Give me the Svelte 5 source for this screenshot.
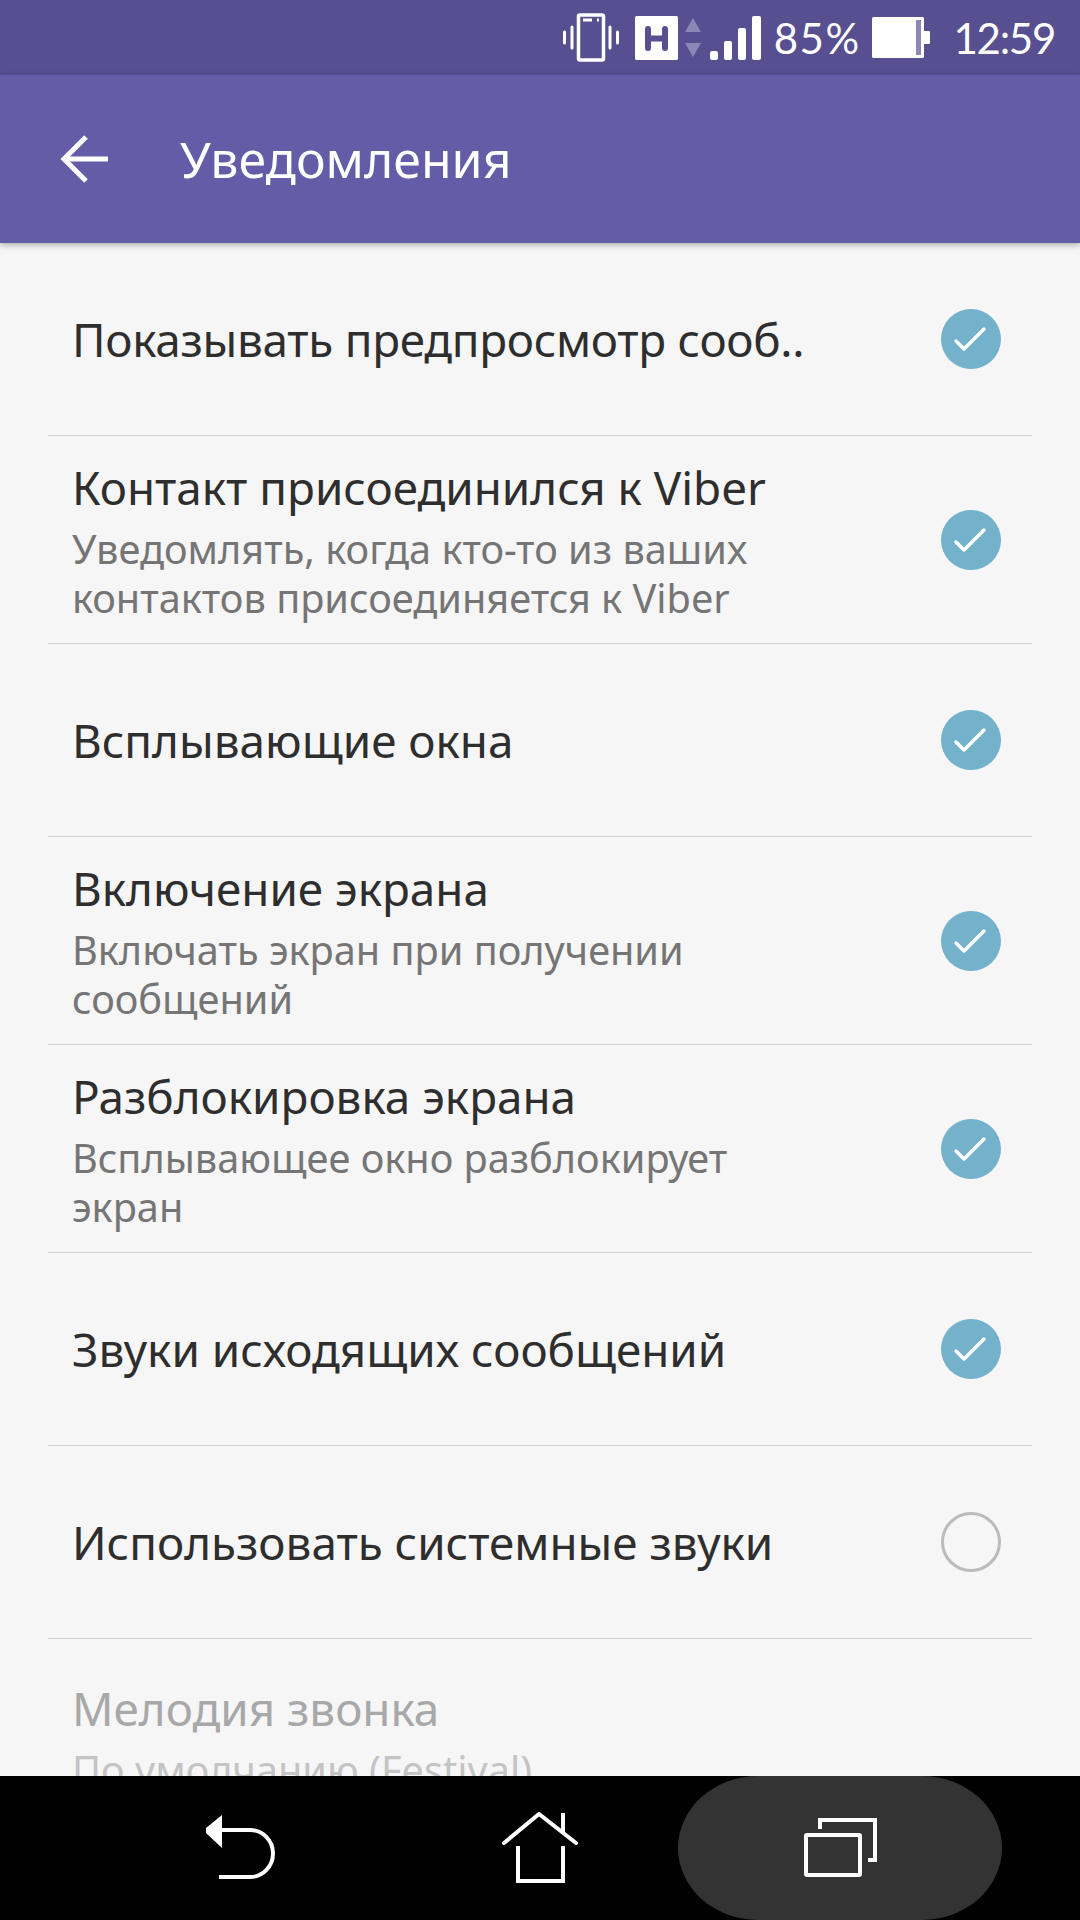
<script>
  const rows = [
    { title: "Показывать предпросмотр сооб..", on: true, h: 193, tight: true },
    { title: "Контакт присоединился к Viber", lines: ["Уведомлять, когда кто-то из ваших", "контактов присоединяется к Viber"], on: true, h: 208 },
    { title: "Всплывающие окна", on: true, h: 193 },
    { title: "Включение экрана", lines: ["Включать экран при получении", "сообщений"], on: true, h: 208 },
    { title: "Разблокировка экрана", lines: ["Всплывающее окно разблокирует", "экран"], on: true, h: 208 },
    { title: "Звуки исходящих сообщений", on: true, h: 193 },
    { title: "Использовать системные звуки", on: false, h: 193 }
  ];
</script>

<div class="screen">
  <div class="status">
    <svg class="vibrate" width="56" height="50" viewBox="0 0 56 50" fill="none" stroke="#fff">
      <rect x="15.500" y="2" width="25" height="45" rx="1.500" stroke-width="3.500" />
      <path d="M20 7h9M34 7h2" stroke-width="3" />
      <path d="M9 14v21M1.500 19v11M47 14v21M54.500 19v11" stroke-width="3" stroke-linecap="round" />
    </svg>
    <svg class="network" width="43" height="44" viewBox="0 0 43 44">
      <rect width="43" height="44" rx="1.500" fill="#fff" />
      <path d="M13 13v19M30 13v19M13 22.500h17" fill="none" stroke="#574f90" stroke-width="6" stroke-linecap="round" />
    </svg>
    <svg class="arrows" width="16" height="39" viewBox="0 0 16 39" fill="#8d87b8">
      <path d="M8 0l8 14H0zM0 25h16l-8 14z" />
    </svg>
    <svg class="signal" width="51" height="44" viewBox="0 0 51 44" fill="#fff">
      <rect x="0" y="35" width="8" height="9" rx="2" />
      <rect x="14" y="25" width="8" height="19" rx="2" />
      <rect x="28" y="12" width="8" height="32" rx="2" />
      <rect x="42" y="0" width="9" height="44" rx="2" />
    </svg>
    <span class="percent">85%</span>
    <svg class="battery" width="58" height="41" viewBox="0 0 58 41">
      <rect width="52" height="41" rx="1.500" fill="#fff" />
      <rect x="44" y="3" width="5" height="35" fill="#8d87b8" />
      <path d="M52 14h5a1 1 0 0 1 1 1v11a1 1 0 0 1-1 1h-5z" fill="#fff" />
    </svg>
    <span class="clock">12:59</span>
  </div>

  <header class="bar">
    <svg class="back" width="48" height="48" viewBox="0 0 48 48" fill="none" stroke="#fff" stroke-width="5">
      <path d="M48 24H3M26 2L4 24l22 22" />
    </svg>
    <h1>Уведомления</h1>
  </header>

  <main class="list">
    {#each rows as row}
      <div class="row" style:height="{row.h}px">
        <div class="text">
          <div class="title" class:tight={row.tight}>{row.title}</div>
          {#each row.lines ?? [] as line}
            <div class="sub">{line}</div>
          {/each}
        </div>
        {#if row.on}
          <svg class="toggle" width="62" height="62" viewBox="0 0 62 62">
            <circle cx="31" cy="31" r="30" fill="#74b1ca" />
            <path d="M16 33l8 8 20-20" fill="none" stroke="#fff" stroke-width="3.500" stroke-linecap="round" stroke-linejoin="round" />
          </svg>
        {:else}
          <svg class="toggle" width="62" height="62" viewBox="0 0 62 62">
            <circle cx="31" cy="31" r="28.500" fill="none" stroke="#bbb" stroke-width="3" />
          </svg>
        {/if}
      </div>
    {/each}
    <div class="row last">
      <div class="text">
        <div class="title">Мелодия звонка</div>
        <div class="sub">По умолчанию (Festival)</div>
      </div>
    </div>
  </main>

  <nav class="nav">
    <svg class="nav-back" width="71" height="66" viewBox="0 0 71 66" fill="none" stroke="#fff" stroke-width="4">
      <path d="M18 0L2 13v5l16 15z" fill="#fff" stroke="none" />
      <path d="M16 15H46a23 23.500 0 0 1 0 47H15" />
    </svg>
    <svg class="nav-home" width="76" height="72" viewBox="0 0 76 72" fill="none" stroke="#fff" stroke-width="4">
      <path d="M2 31L37 2l37 29" stroke-linecap="round" />
      <path d="M16 34v35h45V34M61 1v20" />
    </svg>
    <div class="recent">
      <svg width="76" height="60" viewBox="0 0 76 60" fill="none" stroke="#fff" stroke-width="4">
        <rect x="4" y="17" width="54" height="40" rx="1" />
        <path d="M18 11V2h55v40h-7" />
      </svg>
    </div>
  </nav>
</div>

<style>
  :global(body) {
    margin: 0;
  }
  .screen {
    width: 1080px;
    height: 1920px;
    display: flex;
    flex-direction: column;
    overflow: hidden;
    background: #f6f6f6;
    font-family: "Noto Sans", sans-serif;
  }
  .status {
    height: 75px;
    flex: none;
    display: flex;
    align-items: center;
    justify-content: flex-end;
    padding-right: 25px;
    background: #574f90;
    color: #fff;
    font-family: Lato, sans-serif;
    font-size: 42px;
  }
  .vibrate {
    margin-right: 16px;
  }
  .arrows {
    margin-left: 7px;
  }
  .signal {
    margin-left: 9px;
  }
  .percent {
    margin-left: 13px;
    letter-spacing: 1.500px;
  }
  .battery {
    margin-left: 11px;
  }
  .clock {
    margin-left: 24px;
    letter-spacing: -1.300px;
  }
  .bar {
    height: 168px;
    flex: none;
    display: flex;
    align-items: center;
    padding-left: 60px;
    background: #655ca8;
    color: #fff;
    box-shadow: 0 2px 6px rgba(0, 0, 0, 0.3);
    position: relative;
  }
  .bar h1 {
    margin: 0 0 0 72px;
    font-size: 50px;
    font-weight: 400;
  }
  .list {
    flex: 1;
    min-height: 0;
    overflow: hidden;
    padding: 0 48px;
  }
  .row {
    box-sizing: border-box;
    display: flex;
    align-items: center;
    justify-content: space-between;
    padding: 2px 30px 0 24px;
    border-bottom: 1px solid #d3d3d3;
  }
  .row.last {
    border: 0;
    padding-top: 40px;
  }
  .toggle {
    margin-top: -2px;
  }
  .title {
    font-size: 45.800px;
    line-height: 58px;
    color: #2e2e2e;
  }
  .title:only-child {
    margin-top: -2px;
  }
  .title.tight {
    letter-spacing: -0.280px;
  }
  .sub {
    font-size: 39.700px;
    line-height: 49px;
    color: #757575;
  }
  .title + .sub {
    margin-top: 9px;
  }
  .last .title {
    color: #a8a8a8;
  }
  .last .sub {
    color: #c4c4c4;
  }
  .nav {
    height: 144px;
    flex: none;
    display: flex;
    align-items: center;
    background: #000;
    position: relative;
    padding-left: 204px;
  }
  .nav-home {
    margin-left: 227px;
  }
  .recent {
    position: absolute;
    left: 678px;
    top: 0;
    width: 324px;
    height: 144px;
    border-radius: 80px / 72px;
    background: #333;
    display: flex;
    align-items: center;
    justify-content: center;
  }
</style>
